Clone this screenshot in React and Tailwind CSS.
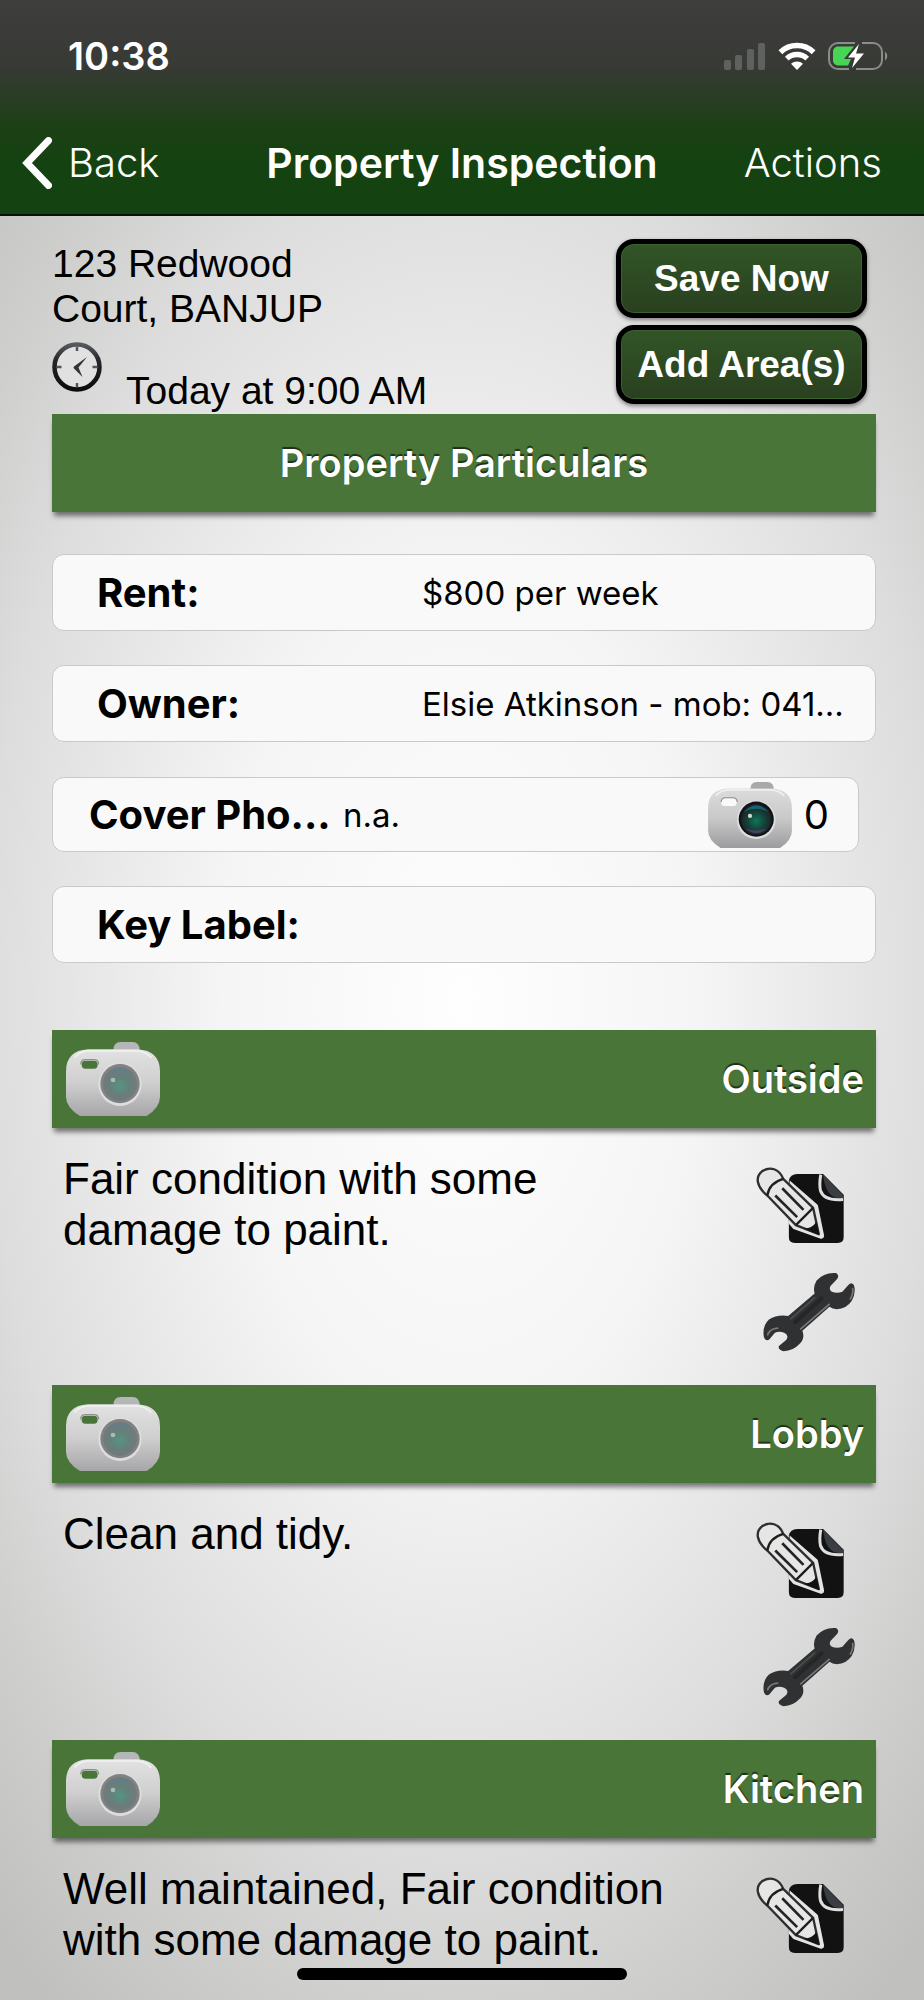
import React from "react";

const heading = "text-[38px] leading-[46px] font-semibold text-white [text-shadow:0_-2px_1px_rgba(0,0,0,0.6)]";

function SignalIcon() {
  return (
    <svg viewBox="0 0 42 27" className="h-[27px] w-[42px]" fill="#ffffff" fillOpacity="0.2" aria-hidden="true">
      <rect x="0" y="17" width="7" height="10" rx="2" />
      <rect x="11" y="12" width="7" height="15" rx="2" />
      <rect x="23" y="6" width="7" height="21" rx="2" />
      <rect x="34" y="0" width="7" height="27" rx="2" />
    </svg>
  );
}

function WifiIcon() {
  return (
    <svg viewBox="0 0 38 28" className="h-7 w-[38px]" aria-hidden="true">
      <g fill="none" stroke="#fff" strokeWidth="5.4">
        <path d="M2.4 10.2a24 24 0 0 1 33.2 0" />
        <path d="M8.8 16.6a14.8 14.8 0 0 1 20.4 0" />
      </g>
      <path d="M19 28l-6-6.2a8.8 8.8 0 0 1 12 0z" fill="#fff" />
    </svg>
  );
}

function BatteryIcon() {
  return (
    <svg viewBox="0 0 61 30" className="h-[30px] w-[61px]" aria-hidden="true">
      <path
        d="M27 2H10a9 9 0 0 0-9 9v8a9 9 0 0 0 9 9h11M34 2h11a9 9 0 0 1 9 9v8a9 9 0 0 1-9 9H28"
        fill="none"
        stroke="#8a8d88"
        strokeWidth="2"
      />
      <path d="M57 10.500a5.500 5.500 0 0 1 0 9z" fill="#8a8d88" />
      <path d="M10 5.500h16L16 18h7l-3 6.500H10a5 5 0 0 1-5-5v-9a5 5 0 0 1 5-5z" fill="#46d654" />
      <path d="M31 3L20 16.500h7L24 27l12-14.500h-8z" fill="#fff" />
    </svg>
  );
}

function ClockIcon() {
  return (
    <svg viewBox="0 0 50 50" className="size-[50px] shrink-0" aria-hidden="true">
      <defs>
        <linearGradient id="clock-rim" x1="0" y1="0" x2="0" y2="1">
          <stop offset="0" stopColor="#55585c" />
          <stop offset="0.35" stopColor="#24262a" />
          <stop offset="1" stopColor="#0c0c0e" />
        </linearGradient>
      </defs>
      <circle cx="25" cy="25" r="22.500" fill="#e0e1e0" stroke="url(#clock-rim)" strokeWidth="4.500" />
      <path d="M25 5v4M25 41v4M5 25h4.500M40.500 25H45" stroke="#555" strokeWidth="2.500" />
      <path d="M35 15L22 24.500q-1 1 0 2L30.500 35l-4-9.500z" fill="#333" />
    </svg>
  );
}

function CameraIcon({ muted = false, className }) {
  const id = muted ? "cam-muted" : "cam";
  return (
    <svg viewBox="48 36 282 222" className={className} aria-hidden="true">
      <defs>
        <linearGradient id={id + "-body"} x1="0" y1="0" x2="0" y2="1">
          <stop offset="0" stopColor={muted ? "#e2e2e3" : "#dcdcdc"} />
          <stop offset="0.5" stopColor={muted ? "#cfcfd0" : "#c9c9ca"} />
          <stop offset="1" stopColor={muted ? "#a6a6a8" : "#9c9c9e"} />
        </linearGradient>
        <radialGradient id={id + "-lens"} cx="0.5" cy="0.55" r="0.5">
          <stop offset="0" stopColor={muted ? "#559482" : "#0f7558"} />
          <stop offset="0.55" stopColor={muted ? "#64807a" : "#14453a"} />
          <stop offset="1" stopColor={muted ? "#747a7a" : "#1c2427"} />
        </radialGradient>
      </defs>
      <path d="M190 62q0-26 22-26h36q20 0 22 26z" fill={muted ? "#b5b6b8" : "#a9a9ab"} />
      <path
        fillRule="evenodd"
        d="M114 58H262q68 4 68 66V200Q330 232 290 258H90Q48 232 48 200V124q0-62 66-66zM106 92q-11 0-11 12t11 12h26q11 0 11-12t-11-12z"
        fill={`url(#${id}-body)`}
      />
      {!muted && <rect x="92" y="91" width="52" height="26" rx="12" fill="#fafafa" />}
      <path d="M92 103q1-14 14-14h26q13 0 14 14" fill="none" stroke="#8f9092" strokeWidth="4" />
      <path d="M74 82q16-18 40-19H262q24 1 42 20" fill="none" stroke="#f2f2f2" strokeWidth="5" />
      <circle cx="210" cy="163" r="65" fill="#dededf" />
      <circle cx="210" cy="161" r="59" fill={muted ? "#808283" : "#111315"} />
      <circle cx="210" cy="162" r="51" fill={`url(#${id}-lens)`} />
      <path d="M168 137q42-46 84 0-42-22-84 0z" fill={muted ? "#5f7f8c" : "#14718a"} opacity="0.8" />
      <path d="M174 192q36 32 72 0-36 14-72 0z" fill={muted ? "#78767e" : "#5a4474"} opacity="0.7" />
      <circle cx="189" cy="150" r="7" fill={muted ? "#a9bcb4" : "#d5dccb"} />
    </svg>
  );
}

function NoteIcon() {
  return (
    <svg viewBox="166 470 268 230" className="h-[77px] w-[89px]" aria-hidden="true">
      <clipPath id="note-page">
        <path d="M268 488H430V698H265V600z" />
      </clipPath>
      <path d="M290 490H368L430 553V680q0 18-18 18H283q-18 0-18-18V510q4-20 25-20z" fill="#121212" />
      <path d="M368 492L430 556V562Q376 572 368 492z" fill="#3a3d41" />
      <path d="M361 492Q356 520 360 540Q370 572 428 567" fill="none" stroke="#dedede" strokeWidth="9" />
      <path
        d="M246 503L344 588 362 676 284 648 200 553z"
        fill="#e4e4e3"
        stroke="#e4e4e3"
        strokeWidth="18"
        strokeLinejoin="round"
        clipPath="url(#note-page)"
      />
      <path
        d="M248 505L338 592 355 671 286 644 200 555C166 528 164 498 184 482C208 466 236 474 248 505z"
        fill="#e6e6e5"
        stroke="#2c2e31"
        strokeWidth="7"
        strokeLinejoin="round"
      />
      <path d="M200 555Q206 517 248 505M286 644L338 592" fill="none" stroke="#1d1e20" strokeWidth="7" />
      <path d="M245 533L309 598M224 555L290 620" fill="none" stroke="#222426" strokeWidth="8" />
      <path d="M308 654Q334 656 348 634L357 674z" fill="#121212" />
    </svg>
  );
}

function WrenchIcon() {
  return (
    <svg viewBox="186 788 282 242" className="h-20 w-[94px]" aria-hidden="true">
      <path
        d="M409 791Q420 799 412 809L392 830Q386 842 396 848Q412 854 428 848L446 827Q456 817 463 828Q470 850 456 876Q440 900 411 901Q398 900 389 893L307 966Q316 990 298 1006Q280 1026 250 1028Q232 1022 236 1012L258 994Q268 980 252 972Q236 966 224 972L206 993Q194 998 190 982Q186 950 206 932Q230 916 264 921L344 853Q338 834 350 814Q372 788 409 791z"
        fill="#303132"
      />
      <path d="M388 886L302 960M452 870Q462 852 459 838M202 978Q208 960 232 958" fill="none" stroke="#77797b" strokeWidth="5" strokeLinecap="round" />
      <path d="M344 866L272 930" fill="none" stroke="#4c4d4f" strokeWidth="5" strokeLinecap="round" />
      <path d="M365 868L285 940" fill="none" stroke="#252627" strokeWidth="12" strokeLinecap="round" />
    </svg>
  );
}

function GlossyButton({ children }) {
  return (
    <button
      type="button"
      className="h-[79px] w-full rounded-[18px] border-[5px] border-black bg-linear-to-b from-[#315526] to-[#29401f] font-['Liberation_Sans',sans-serif] text-[37px] leading-[40px] font-bold text-white shadow-[0_2px_4px_rgba(0,0,0,0.45),inset_0_0_0_1px_#3b6130]"
    >
      {children}
    </button>
  );
}

function Banner({ children, className }) {
  return (
    <div className={`flex h-[98px] items-center bg-[#497638] shadow-[0_6px_5px_-2px_rgba(0,0,0,0.5)] ${className}`}>
      {children}
    </div>
  );
}

const cell = "flex items-center rounded-xl border border-[#c9c9c8] bg-[#f9f9f9] text-black";
const cellLabel = "text-[40px] leading-[48px] font-bold whitespace-nowrap";
const cellValue = "min-w-0 flex-1 truncate text-[33px] leading-[44px]";

function Field({ label, children }) {
  return (
    <div className={`${cell} h-[77px] pr-3 pl-11`}>
      <dt className={`${cellLabel} w-[325px] shrink-0`}>{label}</dt>
      <dd className={cellValue}>{children}</dd>
    </div>
  );
}

function Area({ name, note, repair = true }) {
  return (
    <section className="min-h-[355px]">
      <Banner className="justify-between pr-3 pl-[14px]">
        <button type="button" aria-label={`${name} photos`}>
          <CameraIcon muted className="h-[74px] w-[94px]" />
        </button>
        <h2 className={heading}>{name}</h2>
      </Banner>
      <div className="flex justify-between pt-[25px] pr-5 pl-[11px]">
        <p className="w-[620px] font-['Liberation_Sans',sans-serif] text-[44px] leading-[51px] text-black">{note}</p>
        <div className="flex w-[100px] flex-col items-start gap-7 pt-[14px]">
          <button type="button" aria-label={`Edit ${name} notes`}>
            <NoteIcon />
          </button>
          {repair && (
            <button type="button" aria-label={`${name} maintenance`} className="pl-[6px]">
              <WrenchIcon />
            </button>
          )}
        </div>
      </div>
    </section>
  );
}

export default function App() {
  return (
    <div className="relative flex min-h-screen flex-col overflow-hidden bg-[radial-gradient(76%_62%_at_50%_50%,#fefefe_0%,#f4f5f4_34%,#dcdddc_68%,#cfd0ce_82%,#c0c1be_100%)] font-[Inter,sans-serif]">
      <header className="border-b-2 border-[#0a1208] bg-[linear-gradient(#3e3e3c_0%,#383a36_30%,#2b3c27_43%,#1c4015_60%,#154211_75%,#154211_100%)] text-white">
        <div className="flex h-[112px] items-center justify-between pr-[35px] pl-[68px]">
          <span className="text-[38px] leading-[44px] font-semibold">10:38</span>
          <div className="flex items-center gap-3">
            <SignalIcon />
            <WifiIcon />
            <BatteryIcon />
          </div>
        </div>
        <nav className="grid h-[102px] grid-cols-[1fr_auto_1fr] items-center px-[22px] text-[40px] leading-[48px]">
          <a href="#back" className="flex items-center gap-4 font-light">
            <svg viewBox="0 0 30 52" className="h-[52px] w-[30px]" fill="none" stroke="#fff" strokeWidth="7" strokeLinecap="round" strokeLinejoin="miter" aria-hidden="true">
              <path d="M26.500 3.500L5 26l21.500 22.500" />
            </svg>
            Back
          </a>
          <h1 className="text-[41px] font-semibold">Property Inspection</h1>
          <button type="button" className="justify-self-end pr-5 font-light">Actions</button>
        </nav>
      </header>

      <main className="flex flex-1 flex-col pr-12 pl-[52px]">
        <div className="flex h-[198px] justify-between pt-[23px]">
          <div className="font-['Liberation_Sans',sans-serif] text-[39px] leading-[45px] text-black">
            <p className="w-[340px] pt-[2px]">123 Redwood Court, BANJUP</p>
            <div className="flex items-start gap-6 pt-[11px]">
              <ClockIcon />
              <p className="pt-[26px]">Today at 9:00 AM</p>
            </div>
          </div>
          <div className="mr-[9px] flex w-[251px] flex-col gap-[7px]">
            <GlossyButton>Save Now</GlossyButton>
            <GlossyButton>Add Area(s)</GlossyButton>
          </div>
        </div>

        <Banner className="justify-center">
          <h2 className={heading}>Property Particulars</h2>
        </Banner>

        <dl className="flex flex-col gap-[34px] pt-[42px] pb-[67px]">
          <Field label="Rent:">$800 per week</Field>
          <Field label="Owner:">Elsie Atkinson - mob: 041...</Field>
          <div className={`${cell} mt-px mr-[17px] h-[75px] pr-[29px] pl-9`}>
            <dt className={`${cellLabel} w-[254px] shrink-0`}>Cover Pho...</dt>
            <dd className={cellValue}>n.a.</dd>
            <dd className="flex items-center gap-3">
              <button type="button" aria-label="Add cover photo">
                <CameraIcon className="h-[66px] w-[84px]" />
              </button>
              <span className="text-[40px] leading-[48px]">0</span>
            </dd>
          </div>
          <Field label="Key Label:" />
        </dl>

        <Area name="Outside" note="Fair condition with some damage to paint." />
        <Area name="Lobby" note="Clean and tidy." />
        <div className="h-[259px]">
          <Area name="Kitchen" note="Well maintained, Fair condition with some damage to paint." repair={false} />
        </div>
      </main>

      <div className="absolute bottom-5 left-1/2 h-3 w-[330px] -translate-x-1/2 rounded-full bg-black" />
    </div>
  );
}
